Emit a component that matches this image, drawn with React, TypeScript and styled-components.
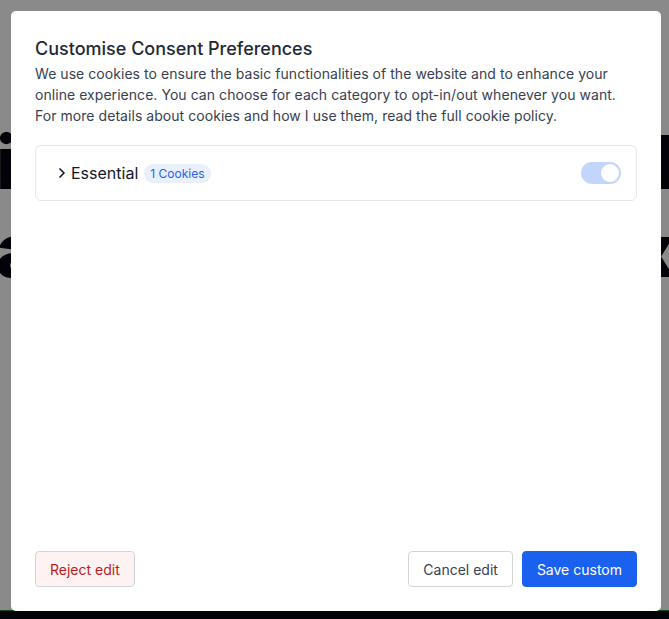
import { ChevronRight } from 'lucide-react';
import styled, { createGlobalStyle } from 'styled-components';

const GlobalStyle = createGlobalStyle`
    html, body {
        margin: 0;
        padding: 0;
        background: #ffffff;
        overflow: hidden;
        font-family: Inter, "Noto Sans", "Liberation Sans", sans-serif;
    }
`;

const Page = styled.div`
    height: 100vh;
    display: flex;
    flex-direction: column;
    background: #ffffff;
`;

const Hero = styled.div`
    flex: 1;
    padding-top: 118px;
    overflow: hidden;
`;

const HeroLine = styled.div`
    display: flex;
    justify-content: space-between;
    margin: 0 -6px 0 -4px;
    font-size: 74px;
    line-height: 88px;
    font-weight: 800;
    color: #05050f;
    white-space: nowrap;
`;

const Footer = styled.div`
    height: 8px;
    background: #05050f;
    border-top: 1px solid #1f8a3a;
`;

const Overlay = styled.div`
    position: fixed;
    inset: 0;
    background: rgba(0, 0, 0, 0.46);
    display: flex;
    align-items: flex-start;
    justify-content: flex-start;
    padding: 11px;
`;

const Modal = styled.div`
    flex-shrink: 0;
    width: 650px;
    height: 600px;
    box-sizing: border-box;
    background: #ffffff;
    border-radius: 5px;
    padding: 24px;
    display: flex;
    flex-direction: column;
`;

const Title = styled.h2`
    margin: 0;
    font-size: 18px;
    line-height: 28px;
    font-weight: 500;
    color: #1f2937;
`;

const Description = styled.p`
    margin: 0;
    font-size: 14px;
    line-height: 21px;
    color: #374151;
    letter-spacing: 0.05px;
`;

const Category = styled.div`
    margin-top: 19px;
    height: 56px;
    box-sizing: border-box;
    border: 1px solid #e5e7eb;
    border-radius: 6px;
    padding: 0 15px 0 18px;
    display: flex;
    align-items: center;
    justify-content: space-between;
`;

const CategoryLabel = styled.div`
    display: flex;
    align-items: center;
    gap: 1px;
    font-size: 16px;
    color: #111827;

    svg {
        color: #111827;
    }
`;

const Badge = styled.span`
    margin-left: 5px;
    display: inline-flex;
    align-items: center;
    height: 19px;
    padding: 0 6px;
    border-radius: 10px;
    background: #e8effd;
    color: #2563eb;
    font-size: 12px;
`;

const Toggle = styled.div<{ $on: boolean }>`
    width: 40px;
    height: 22px;
    border-radius: 11px;
    background: ${props => props.$on ? '#c4d5fc' : '#e5e7eb'};
    display: flex;
    align-items: center;
    justify-content: ${props => props.$on ? 'flex-end' : 'flex-start'};
    padding: 0 2px;
    box-sizing: border-box;

    &::after {
        content: '';
        width: 18px;
        height: 18px;
        border-radius: 50%;
        background: #ffffff;
    }
`;

const Spacer = styled.div`
    flex: 1;
`;

const Actions = styled.div`
    display: flex;
    justify-content: space-between;
    align-items: center;
`;

const ButtonGroup = styled.div`
    display: flex;
    gap: 9px;
`;

const Button = styled.button<{ $variant: 'danger' | 'default' | 'primary' }>`
    height: 36px;
    padding: 0 14px;
    border-radius: 4px;
    font-family: inherit;
    font-size: 14px;
    cursor: pointer;
    border: 1px solid ${props => props.$variant === 'primary' ? '#1b61ef' : '#d1d5db'};
    background: ${props =>
        props.$variant === 'primary' ? '#1b61ef' :
        props.$variant === 'danger' ? '#fef2f2' : '#ffffff'};
    color: ${props =>
        props.$variant === 'primary' ? '#ffffff' :
        props.$variant === 'danger' ? '#b91c1c' : '#374151'};
`;

export default function App() {
    return (
        <>
            <GlobalStyle />
            <Page>
                <Hero>
                    <HeroLine><span>in</span><span>ld</span></HeroLine>
                    <HeroLine><span>ab</span><span>ox</span></HeroLine>
                </Hero>
                <Footer />
            </Page>

            <Overlay>
                <Modal>
                    <Title>Customise Consent Preferences</Title>
                    <Description>
                        We use cookies to ensure the basic functionalities of the website and to enhance your
                        online experience. You can choose for each category to opt-in/out whenever you want.
                        For more details about cookies and how I use them, read the full cookie policy.
                    </Description>

                    <Category>
                        <CategoryLabel>
                            <ChevronRight size={16} strokeWidth={2.5} />
                            Essential
                            <Badge>1 Cookies</Badge>
                        </CategoryLabel>
                        <Toggle $on={true} />
                    </Category>

                    <Spacer />

                    <Actions>
                        <Button $variant="danger">Reject edit</Button>
                        <ButtonGroup>
                            <Button $variant="default">Cancel edit</Button>
                            <Button $variant="primary">Save custom</Button>
                        </ButtonGroup>
                    </Actions>
                </Modal>
            </Overlay>
        </>
    )
}
